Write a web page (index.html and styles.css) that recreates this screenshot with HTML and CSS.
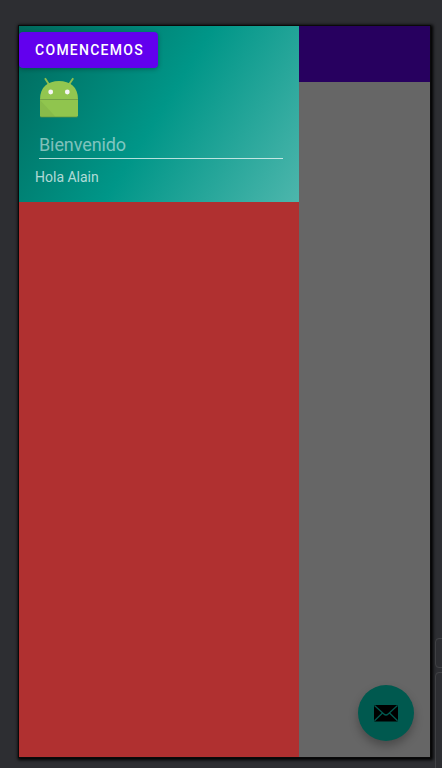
FILE: index.html
```html
<!DOCTYPE html>
<html lang="es">
<head>
<meta charset="utf-8">
<title>Comencemos</title>
<link rel="stylesheet" href="styles.css">
</head>
<body>
<div class="panel panel-small"></div>
<div class="panel panel-large"></div>
<main class="device">
  <aside class="drawer">
    <header class="drawer-header">
      <button class="start">COMENCEMOS</button>
      <svg class="robot" width="40" height="42" viewBox="0 0 40 42">
        <path d="M6 2.200 10 8.500M34.200 2.200 30 8.500" stroke="#8fbf4d" stroke-width="1.900"/>
        <path d="M1 23.300C1 11 9 5 20 5s19 6 19 18.300z" fill="#92c650"/>
        <path d="M1 24h38v15.300q0 1.700-1.700 1.700H2.700Q1 41 1 39.300z" fill="#90c54e"/>
        <path d="M1 24 16.500 40.800H2.700Q1 41 1 39.300z" fill="#88bb4a"/>
        <path d="M1 23.500h38" stroke="#74a346"/>
        <path d="M1.500 41h37" stroke="#65963f" stroke-width=".7"/>
        <circle cx="11.700" cy="16" r="2.400" fill="#f5f5f5"/>
        <circle cx="28.300" cy="16" r="2.400" fill="#f5f5f5"/>
      </svg>
      <div class="field">Bienvenido</div>
      <div class="greeting">Hola Alain</div>
    </header>
  </aside>
  <section class="content">
    <div class="appbar"></div>
    <button class="fab" aria-label="Email">
      <svg width="24" height="18" viewBox="0 0 24 18">
        <rect y="1" width="24" height="16.500" rx="1" fill="#000"/>
        <path d="M.5 1.500 9.800 10Q12 12 14.200 10L23.500 1.500M.5 16.800 8.500 9M23.500 16.800 15.500 9" fill="none" stroke="#00594f" stroke-width="1.300"/>
      </svg>
    </button>
  </section>
</main>
</body>
</html>
```
FILE: styles.css
```css
* {
  box-sizing: border-box;
}

body {
  margin: 0;
  height: 768px;
  padding: 26px 12px 11px 19px;
  overflow: hidden;
  position: relative;
  background: #2d2e32;
  font-family: Roboto, sans-serif;
}

button {
  border: 0;
  padding: 0;
  font-family: inherit;
}

.device {
  display: flex;
  position: relative;
  width: 411px;
  height: 731px;
  box-shadow: 0 0 0 1px #0a0a0a, 1px 1px 3px 2px #000;
}

.drawer {
  width: 280px;
  background: #b03030;
}

.drawer-header {
  display: flex;
  flex-direction: column;
  align-items: flex-start;
  height: 176px;
  padding-top: 6px;
  color: rgba(255, 255, 255, .7);
  background: linear-gradient(122.15deg, #00695c, #009688 50%, #4db6ac);
}

.start {
  width: 139px;
  height: 36px;
  padding-left: 2px;
  border-radius: 4px;
  background: #6200ee;
  color: #fff;
  font-size: 14px;
  font-weight: 500;
  letter-spacing: 1.25px;
  box-shadow: 0 1px 5px rgba(0, 0, 0, .3);
}

.robot {
  margin: 8px 0 0 20px;
}

.field {
  width: 244px;
  height: 41px;
  margin-left: 20px;
  padding-top: 16px;
  border-bottom: 1px solid rgba(255, 255, 255, .7);
  color: rgba(255, 255, 255, .5);
  font-size: 18px;
  letter-spacing: -.1px;
  line-height: 21px;
}

.greeting {
  margin: 10px 0 0 16px;
  font-size: 14px;
  line-height: 16px;
}

.content {
  display: flex;
  flex: 1;
  flex-direction: column;
  justify-content: space-between;
  background: #666;
}

.appbar {
  height: 56px;
  background: #27005f;
}

.fab {
  display: flex;
  align-items: center;
  justify-content: center;
  align-self: flex-end;
  width: 56px;
  height: 56px;
  margin: 0 16px 16px 0;
  border-radius: 50%;
  background: #00594f;
  box-shadow: 0 5px 10px rgba(0, 0, 0, .28);
}

.panel {
  position: absolute;
  left: 435px;
  width: 20px;
  border: 1px solid #434447;
  border-radius: 4px;
}

.panel-small {
  top: 638px;
  height: 30px;
}

.panel-large {
  top: 672px;
  height: 110px;
}
```
